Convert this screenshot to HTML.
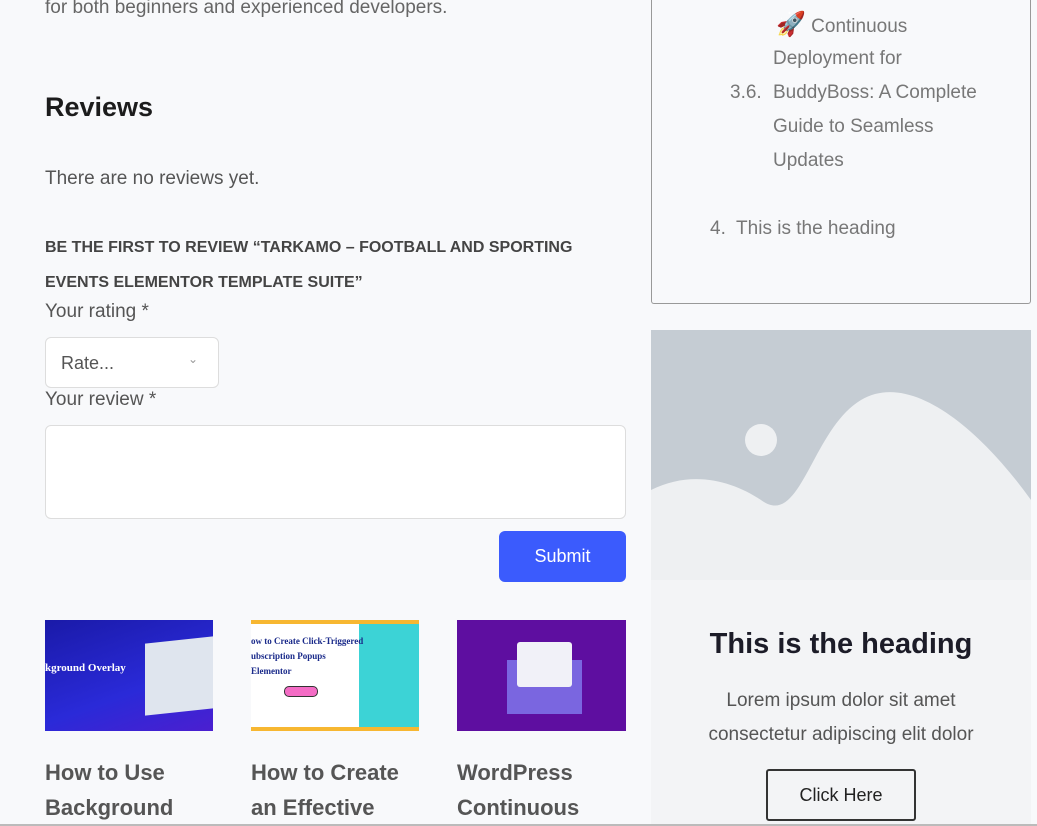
<!DOCTYPE html>
<html><head><style>
*{margin:0;padding:0;box-sizing:border-box}
body{width:1037px;height:826px;overflow:hidden;background:#f8f9fb;font-family:"Liberation Sans",sans-serif;position:relative;color:#444}
.a{position:absolute;white-space:nowrap}
.g{color:#777;font-size:19px}
</style></head><body>
<div class="a" style="left:45px;top:-3px;font-size:19px;color:#666">for both beginners and experienced developers.</div>
<div class="a" style="left:45px;top:92px;font-size:27px;font-weight:bold;color:#1c1c1c">Reviews</div>
<div class="a" style="left:45px;top:168px;font-size:19px;color:#555">There are no reviews yet.</div>
<div class="a" style="left:45px;top:230px;font-size:16px;font-weight:bold;color:#444;line-height:35px">BE THE FIRST TO REVIEW “TARKAMO – FOOTBALL AND SPORTING<br>EVENTS ELEMENTOR TEMPLATE SUITE”</div>
<div class="a" style="left:45px;top:301px;font-size:19px;color:#555">Your rating *</div>
<div class="a" style="left:45px;top:337px;width:174px;height:51px;border:1px solid #ddd;border-radius:6px;background:#fff;font-size:18px;color:#555;padding:15px 15px">Rate...<span style="position:absolute;right:20px;top:14px;font-size:12px;color:#999">&#8964;</span></div>
<div class="a" style="left:45px;top:389px;font-size:19px;color:#555">Your review *</div>
<div class="a" style="left:45px;top:425px;width:581px;height:94px;border:1px solid #ddd;border-radius:6px;background:#fff"></div>
<div class="a" style="left:499px;top:531px;width:127px;height:51px;background:#3b5bfd;border-radius:6px;color:#fff;font-size:18px;text-align:center;line-height:51px">Submit</div>

<div class="a" style="left:45px;top:620px;width:168px;height:111px;background:linear-gradient(160deg,#1a1aa8,#2a2ad8 60%,#4b1fd0)"><div style="position:absolute;left:100px;top:20px;width:68px;height:72px;background:#dfe5ee;transform:skewY(-6deg)"></div><div style="position:absolute;left:0;top:42px;color:#fff;font-size:11px;font-weight:bold;font-family:'Liberation Serif',serif">kground Overlay</div></div>
<div class="a" style="left:251px;top:620px;width:168px;height:111px;background:#fff;border-top:4px solid #f7b731;border-bottom:4px solid #f7b731"><div style="position:absolute;right:0;top:0;width:60px;height:103px;background:#3cd3d6"></div><div style="position:absolute;left:0;top:10px;font-size:9px;font-weight:bold;color:#1a2a8a;font-family:'Liberation Serif',serif;line-height:15px">ow to Create Click-Triggered<br>ubscription Popups<br>Elementor</div><div style="position:absolute;left:33px;top:62px;width:34px;height:11px;background:#f46cc5;border:1px solid #333;border-radius:5px"></div></div>
<div class="a" style="left:457px;top:620px;width:169px;height:111px;background:#5e0ea0"><div style="position:absolute;left:50px;top:40px;width:75px;height:54px;background:#7a66e0"></div><div style="position:absolute;left:60px;top:22px;width:55px;height:45px;background:#f1f1f8;border-radius:3px"></div></div>

<div class="a" style="left:45px;top:755px;font-size:22px;font-weight:bold;color:#555;line-height:35px">How to Use<br>Background</div>
<div class="a" style="left:251px;top:755px;font-size:22px;font-weight:bold;color:#555;line-height:35px">How to Create<br>an Effective</div>
<div class="a" style="left:457px;top:755px;font-size:22px;font-weight:bold;color:#555;line-height:35px">WordPress<br>Continuous</div>

<div class="a" style="left:651px;top:-5px;width:380px;height:309px;border:1px solid #999;border-radius:3px;border-top:none"></div>
<div class="a g" style="left:776px;top:10px"><span style="font-size:24px">🚀</span> Continuous</div>
<div class="a g" style="left:773px;top:42px;line-height:34px">Deployment for<br>BuddyBoss: A Complete<br>Guide to Seamless<br>Updates</div>
<div class="a g" style="left:730px;top:76px;line-height:34px">3.6.</div>
<div class="a g" style="left:710px;top:218px">4.&nbsp; This is the heading</div>

<div class="a" style="left:651px;top:330px;width:380px;height:250px;background:#c5ccd3;overflow:hidden">
<svg width="380" height="250" style="position:absolute;left:0;top:0"><circle cx="110" cy="110" r="16" fill="#eef0f2"/><path d="M0 160 C40 140 80 150 110 170 C150 200 160 100 210 70 C260 40 330 100 380 170 L380 250 L0 250Z" fill="#eef0f2"/></svg></div>
<div class="a" style="left:651px;top:580px;width:380px;height:246px;background:#f3f4f6"></div>
<div class="a" style="left:651px;top:628px;width:380px;text-align:center;font-size:29px;font-weight:bold;color:#1c1c28">This is the heading</div>
<div class="a" style="left:651px;top:684px;width:380px;text-align:center;font-size:19px;color:#555;line-height:34px">Lorem ipsum dolor sit amet<br>consectetur adipiscing elit dolor</div>
<div class="a" style="left:766px;top:769px;width:150px;height:52px;border:2px solid #333;border-radius:3px;text-align:center;line-height:48px;font-size:18px;color:#222">Click Here</div>
<div class="a" style="left:0;top:824px;width:1037px;height:2px;background:#bbb"></div>
</body></html>
